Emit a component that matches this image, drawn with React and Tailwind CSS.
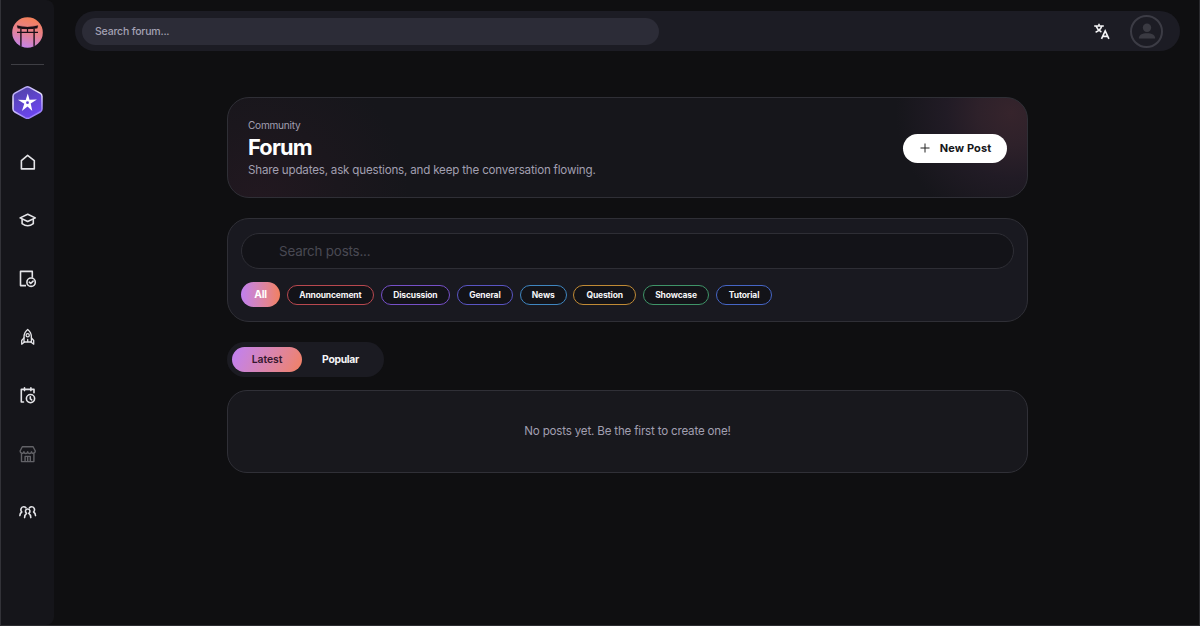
import { useState } from "react";

const categories = [
  { name: "Announcement", className: "w-[87px] border-[#b8484f]" },
  { name: "Discussion", className: "w-[69.5px] border-[#7650c8]" },
  { name: "General", className: "w-[56px] border-[#5a55c4]" },
  { name: "News", className: "w-[47px] border-[#3f86c0]" },
  { name: "Question", className: "w-[62.5px] border-[#c08a35]" },
  { name: "Showcase", className: "w-[66.5px] border-[#3f9468]" },
  { name: "Tutorial", className: "w-[56px] border-[#4666c6]" },
];

function Icon({ children, className = "text-[#e4e4e8]" }) {
  return (
    <svg
      viewBox="0 0 18 18"
      fill="none"
      stroke="currentColor"
      strokeWidth="1.6"
      strokeLinecap="round"
      strokeLinejoin="round"
      className={`size-[18px] shrink-0 ${className}`}
    >
      {children}
    </svg>
  );
}

function ToriiLogo() {
  return (
    <svg viewBox="0 0 31 31" className="size-[31px] shrink-0">
      <defs>
        <linearGradient id="torii" x1="0.15" y1="1" x2="0.45" y2="0">
          <stop offset="0" stopColor="#c084f5" />
          <stop offset="0.55" stopColor="#e68190" />
          <stop offset="1" stopColor="#f4805c" />
        </linearGradient>
        <clipPath id="disc">
          <circle cx="15.5" cy="15.5" r="15.3" />
        </clipPath>
      </defs>
      <circle cx="15.5" cy="15.5" r="15.3" fill="url(#torii)" />
      <g clipPath="url(#disc)" fill="none" stroke="#1b1118">
        <path d="M5 8.6Q15.5 11.4 26 8.6L25.3 11.2Q15.5 13 5.7 11.2Z" fill="#1b1118" strokeWidth="0.2" />
        <path d="M5 15.4H26" strokeWidth="1.4" />
        <path d="M8.9 11.5V31M22.1 11.5V31" strokeWidth="1.4" />
        <path d="M15.5 11.5V15.4" strokeWidth="1.2" />
      </g>
    </svg>
  );
}

function StarBadge() {
  return (
    <svg viewBox="0.5 0.3 32 34" className="h-[34px] w-8 shrink-0">
      <defs>
        <linearGradient id="badge" x1="0.2" y1="0" x2="0.7" y2="1">
          <stop offset="0" stopColor="#5144a6" />
          <stop offset="1" stopColor="#6e45f6" />
        </linearGradient>
        <linearGradient id="badgeEdge" x1="0" y1="0" x2="0.4" y2="1">
          <stop offset="0" stopColor="#9a86f0" />
          <stop offset="0.45" stopColor="#efeaff" />
          <stop offset="1" stopColor="#9c82fa" />
        </linearGradient>
      </defs>
      <path
        d="M13.9 1.7Q16 .6 18.1 1.7L28.6 7.5Q30.5 8.6 30.5 10.6V23.2Q30.5 25.2 28.6 26.3L18.1 32.1Q16 33.2 13.9 32.1L3.4 26.3Q1.5 25.2 1.5 23.2V10.6Q1.5 8.6 3.4 7.5Z"
        fill="url(#badge)"
        stroke="url(#badgeEdge)"
        strokeWidth="1.5"
      />
      <path
        d="M16.3 7.8L18 14L25.4 13.9L19.2 17.8L20.8 25.2L16 20.9L10.4 25.2L12.8 18L6.4 14.1L14.2 14.2Z"
        fill="#fff"
      />
      <circle cx="16" cy="17" r="1.4" fill="#5a3fd0" />
    </svg>
  );
}

function Sidebar() {
  return (
    <aside className="flex w-[54px] shrink-0 flex-col items-center rounded-r-lg border-l border-[#323238] bg-[#15151a] pt-[17px]">
      <div className="pr-px">
        <ToriiLogo />
      </div>
      <div className="mr-px mt-4 h-px w-[33px] bg-[#3e3e44]" />
      <div className="mt-[20.6px]">
        <StarBadge />
      </div>
      <nav className="mt-[33.6px] flex flex-col items-center gap-[40.3px]">
        <Icon>
          <path d="M8.6 2.4L2.4 7.6V15.9H15.3V7.6Z" />
        </Icon>
        <Icon>
          <path d="M8.7 3.3L16.3 6.9L8.7 10.5L1.1 6.9Z" />
          <path d="M3.1 8.5V12.7Q8.7 16.9 14.3 12.7V8.5" />
        </Icon>
        <Icon>
          <path d="M6.2 15.6H1.5V1.4H13.3V7" strokeLinecap="square" />
          <circle cx="12.1" cy="12.2" r="4.2" />
          <path d="M10.3 12.2L11.7 13.5L14.1 11.1" />
        </Icon>
        <Icon>
          <path d="M8.7 1.5C6 3.6 5 6.2 5 9V14H12.4V9C12.4 6.2 11.4 3.6 8.7 1.5Z" strokeWidth="1.3" />
          <circle cx="8.7" cy="7.3" r="1.6" strokeWidth="1.3" />
          <path d="M5 9.8L2.7 12.5V16.2L5.5 14M12.4 9.8L14.7 12.5V16.2L11.9 14M8.7 11.5V13.5" strokeWidth="1.3" />
        </Icon>
        <Icon>
          <path d="M4.5 16H2.3V3.4H15V6.8M5.5 1.8V4.6M11.9 1.8V4.6" />
          <circle cx="11.5" cy="12.6" r="4.1" />
          <path d="M11.3 10.7V12.8L12.7 13.9" />
        </Icon>
        <Icon className="text-[#626267]">
          <path d="M3.3 1.8H14.1L16.3 6C16.3 8.8 12.5 9.1 12.5 6.6C12.5 9.1 8.7 9.1 8.7 6.6C8.7 9.1 4.9 9.1 4.9 6.6C4.9 9.1 1.1 8.8 1.1 6Z" strokeWidth="1.4" />
          <path d="M2.5 8.7V16.6H14.9V8.7M6.1 16.4V11.4H11.3V16.4M8.7 11.6V16.4" strokeWidth="1.4" />
        </Icon>
        <Icon>
          <path d="M5.6 14.6C5.6 12.4 6.4 11.2 7.6 10.4C5.6 8.9 6.3 6 8.7 6C11.1 6 11.8 8.9 9.8 10.4C11 11.2 11.8 12.4 11.8 14.6" />
          <path d="M.9 12.6C.9 10.7 1.7 9.7 2.8 9C1.1 7.2 1.9 3.7 4.6 3.7C5.7 3.7 6.4 4.1 6.9 4.8" />
          <path d="M16.5 12.6C16.5 10.7 15.7 9.7 14.6 9C16.3 7.2 15.5 3.7 12.8 3.7C11.7 3.7 11 4.1 10.5 4.8" />
        </Icon>
      </nav>
    </aside>
  );
}

function TopBar() {
  return (
    <header className="ml-[21px] mr-[19px] mt-[11px] flex h-10 items-center rounded-full bg-[#1c1c24] pl-[7px] pr-[17px]">
      <input
        type="text"
        placeholder="Search forum..."
        className="h-[27px] w-[577px] rounded-full bg-[#2c2c37] px-[13px] text-[10.5px] font-medium tracking-[-0.2px] text-white outline-none placeholder:text-[#a3a1b3]"
      />
      <div className="ml-auto flex items-center gap-[20px]">
        <svg viewBox="0 0 16 17" className="h-[17px] w-4" fill="none" stroke="#f4f4f6" strokeWidth="1.6">
          <path d="M.2 3H9.8M5 .8V3M7.7 3.2C6.9 5.6 4.4 8 1.6 9.2M2.3 3.4C3.1 5.8 4.8 7.6 7.4 9" />
          <path d="M7.5 15.8L11.2 7.8L14.9 15.8M8.7 13.4H13.7" />
        </svg>
        <button className="flex size-[33px] items-center justify-center rounded-full border-2 border-[#3c3c45]">
          <svg viewBox="0 0 18 18" className="size-[18px]" fill="#3a3a42">
            <circle cx="9" cy="5.8" r="4.2" />
            <path d="M.8 16.6C.8 12.9 4 11.2 9 11.2S17.2 12.9 17.2 16.6Z" />
          </svg>
        </button>
      </div>
    </header>
  );
}

export default function App() {
  const [tab, setTab] = useState("Latest");

  return (
    <div className="flex h-[626px] w-[1200px] overflow-hidden border-b border-r border-[#2b2b2f] bg-[#0f0f11] font-['Inter',sans-serif] text-white">
      <Sidebar />
      <div className="min-w-0 flex-1">
        <TopBar />
        <main className="ml-[173px] mt-[46px] w-[801px]">
          <section className="flex h-[101px] items-center justify-between rounded-[22px] border border-[#2f2f36] bg-[#16161b] bg-[radial-gradient(circle_at_98%_15%,#36242c_0,#2e212a_32px,#211b25_65px,transparent_115px),radial-gradient(circle_at_4%_105%,#221820_0,#1b171d_80px,transparent_150px)] px-5">
            <div className="pt-px">
              <p className="text-[10.1px] leading-[15px] tracking-[-0.25px] text-[#a19fb0]">Community</p>
              <h1 className="text-[21.8px] font-bold leading-[28px] tracking-[-0.8px]">Forum</h1>
              <p className="text-[11.6px] leading-[18px] tracking-[-0.19px] text-[#a19fb0]">
                Share updates, ask questions, and keep the conversation flowing.
              </p>
            </div>
            <button className="mt-px flex h-[29px] w-[104px] items-center justify-center gap-[10px] rounded-full bg-white pl-px text-[11px] font-bold tracking-[0.12px] text-[#16161a]">
              <svg viewBox="0 0 10 10" className="size-[10px]" stroke="#222" strokeWidth="1">
                <path d="M5 .5V9.5M.5 5H9.5" />
              </svg>
              New Post
            </button>
          </section>

          <section className="mt-5 h-[104px] rounded-[22px] border border-[#2f2f36] bg-[#191920] px-[13px] pt-[14px]">
            <input
              type="text"
              placeholder="Search posts..."
              className="block h-[36px] w-full rounded-full border border-[#2e2e35] bg-[#131318] px-[37px] text-[13.4px] tracking-[-0.2px] outline-none placeholder:text-[#494953]"
            />
            <div className="mt-[13px] flex items-center gap-[6.8px]">
              <button className="h-[25px] w-[39px] rounded-full bg-linear-to-r from-[#c07ff0] to-[#f2805e] pt-px text-[10.3px] font-bold tracking-[-0.2px]">
                All
              </button>
              {categories.map((category) => (
                <button
                  key={category.name}
                  className={`flex h-5 items-center justify-center rounded-full border bg-[#131318] pt-px text-[8.5px] font-bold tracking-[-0.15px] text-[#f5f5f7] ${category.className}`}
                >
                  {category.name}
                </button>
              ))}
            </div>
          </section>

          <div className="mt-5 flex h-[35px] w-[157px] items-center rounded-full bg-[#1b1b22] px-[5px]">
            {["Latest", "Popular"].map((name) => (
              <button
                key={name}
                onClick={() => setTab(name)}
                className={`h-[25px] rounded-full pt-px text-[10.4px] ${
                  tab === name
                    ? "w-[70px] bg-linear-115 from-[#c07ff5] to-[#f2805e] font-semibold tracking-[-0.05px] text-[#35172e]"
                    : "w-[77px] font-bold tracking-[-0.33px] text-[#f5f5f7]"
                }`}
              >
                {name}
              </button>
            ))}
          </div>

          <section className="mt-[13px] flex h-[83px] items-center justify-center rounded-[20px] border border-[#303037] bg-[#18181d]">
            <p className="pt-px text-[11.6px] tracking-[-0.19px] text-[#a19fb0]">No posts yet. Be the first to create one!</p>
          </section>
        </main>
      </div>
    </div>
  );
}
